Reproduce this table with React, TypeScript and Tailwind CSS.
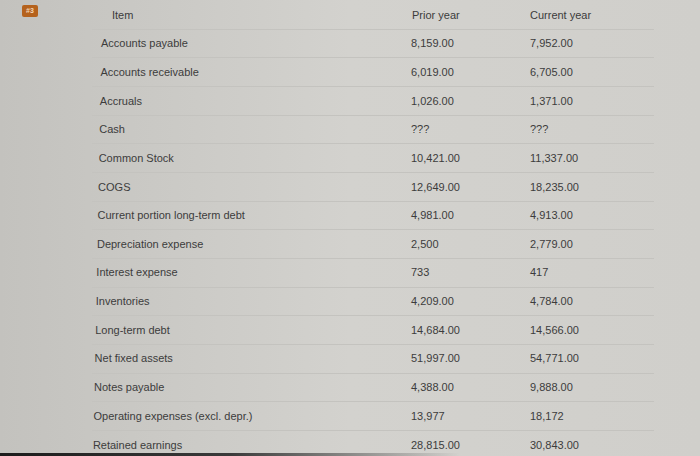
import React from 'react';

const rows: [string, string, string][] = [
    ['Accounts payable', '8,159.00', '7,952.00'],
    ['Accounts receivable', '6,019.00', '6,705.00'],
    ['Accruals', '1,026.00', '1,371.00'],
    ['Cash', '???', '???'],
    ['Common Stock', '10,421.00', '11,337.00'],
    ['COGS', '12,649.00', '18,235.00'],
    ['Current portion long-term debt', '4,981.00', '4,913.00'],
    ['Depreciation expense', '2,500', '2,779.00'],
    ['Interest expense', '733', '417'],
    ['Inventories', '4,209.00', '4,784.00'],
    ['Long-term debt', '14,684.00', '14,566.00'],
    ['Net fixed assets', '51,997.00', '54,771.00'],
    ['Notes payable', '4,388.00', '9,888.00'],
    ['Operating expenses (excl. depr.)', '13,977', '18,172'],
    ['Retained earnings', '28,815.00', '30,843.00'],
];

const App = () => {
    return (
        <div
            className="relative w-[700px] h-[456px] overflow-hidden bg-gradient-to-r from-[#c3c2be] via-[#d3d2ce] to-[#d0cfcb] text-[#3c3c3c]"
            style={{ fontFamily: '"Liberation Sans", Arial, sans-serif' }}
        >
            <div className="absolute left-[22px] top-[5px] w-[16px] h-[12px] rounded-[2px] bg-[#b5621d] text-[#f3d6b8] text-[7px] font-bold leading-[12px] text-center">
                #3
            </div>

            <div className="ml-[92px] w-[562px] pt-[1px]">
                <div className="grid grid-cols-[318px_120px_1fr] h-[28.67px] items-center text-[11px] border-b border-[#c4c3bf]">
                    <span className="pl-[20px]">Item</span>
                    <span className="pl-[2px]">Prior year</span>
                    <span>Current year</span>
                </div>
                {rows.map(([name, prior, current], i) => (
                    <div
                        key={name}
                        className="grid grid-cols-[318px_120px_1fr] h-[28.67px] items-center text-[11px] border-b border-[#c4c3bf] last:border-b-0"
                    >
                        <span style={{ paddingLeft: 9 - i * 0.58 }}>{name}</span>
                        <span className="pl-[1px]">{prior}</span>
                        <span>{current}</span>
                    </div>
                ))}
            </div>

            <div className="absolute left-0 bottom-0 w-[460px] h-[3px] bg-gradient-to-r from-[#1c1c1c] via-[#3a3a3a] to-transparent" />
        </div>
    );
};

export default App;
